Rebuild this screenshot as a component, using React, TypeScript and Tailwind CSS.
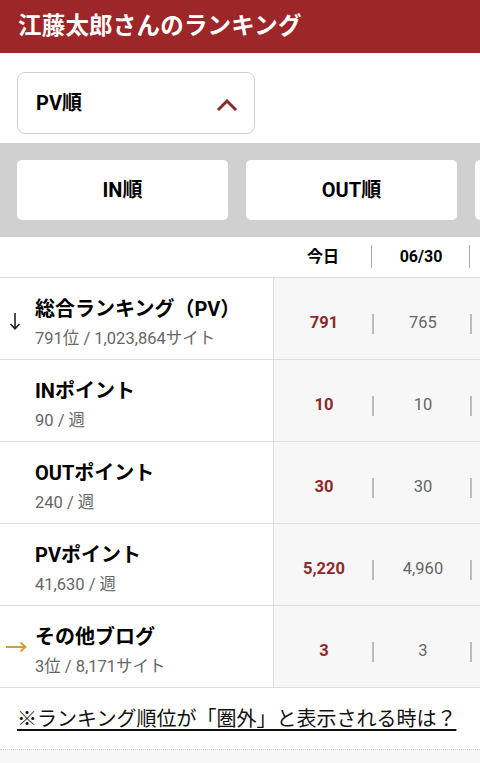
import React from "react";

const font = { fontFamily: "Roboto, 'Noto Sans CJK JP', sans-serif" };

type Row = { arrow?: "down" | "right"; label: string; sub: string; today: string; prev: string };

const rows: Row[] = [
  { arrow: "down", label: "総合ランキング（PV）", sub: "791位 / 1,023,864サイト", today: "791", prev: "765" },
  { label: "INポイント", sub: "90 / 週", today: "10", prev: "10" },
  { label: "OUTポイント", sub: "240 / 週", today: "30", prev: "30" },
  { label: "PVポイント", sub: "41,630 / 週", today: "5,220", prev: "4,960" },
  { arrow: "right", label: "その他ブログ", sub: "3位 / 8,171サイト", today: "3", prev: "3" },
];

export default function App() {
  return (
    <div className="w-[480px] h-[763px] overflow-hidden bg-white text-black" style={font}>
      <div className="h-[53px] bg-[#9c2628] flex items-center pl-[18px]">
        <h1 className="text-white font-bold text-[23.5px] leading-none tracking-[0.2px]">江藤太郎さんのランキング</h1>
      </div>
      <div className="h-[90px] pt-[19px] pl-[17px]">
        <div className="w-[238px] h-[62px] rounded-[8px] border border-[#cfcfcf] flex items-center justify-between pl-[18px] pr-[16px]">
          <span className="font-bold text-[20px]">PV順</span>
          <svg width="22" height="14" viewBox="0 0 22 14" className="mt-[3px]">
            <path d="M2 12 L11 3 L20 12" fill="none" stroke="#8c2a2b" strokeWidth="3" />
          </svg>
        </div>
      </div>
      <div className="h-[94px] bg-[#d0d0d0] flex items-center gap-[18px] pl-[17px] overflow-hidden">
        <div className="shrink-0 w-[211px] h-[60px] bg-white rounded-[5px] flex items-center justify-center font-bold text-[20px]">IN順</div>
        <div className="shrink-0 w-[211px] h-[60px] bg-white rounded-[5px] flex items-center justify-center font-bold text-[20px]">OUT順</div>
        <div className="shrink-0 w-[211px] h-[60px] bg-white rounded-[5px]" />
      </div>
      <div className="h-[41px] flex border-b border-[#dddddd]">
        <div className="w-[274px] shrink-0" />
        {["今日", "06/30"].map((t) => (
          <div key={t} className="w-[98px] shrink-0 flex items-center justify-center relative font-bold text-[16px]">
            {t}
            <span className="absolute right-0 top-[8px] h-[23px] w-px bg-[#aaaaaa]" />
          </div>
        ))}
      </div>
      {rows.map((r) => (
        <div key={r.label} className="h-[82px] flex border-b border-[#dddddd]">
          <div className="w-[274px] shrink-0 relative border-r border-[#dddddd] pl-[35px] pt-[18px]">
            {r.arrow === "down" && (
              <svg width="12" height="18" viewBox="0 0 12 18" className="absolute left-[9px] top-[34px]">
                <path d="M6 1 V16.5 M1.5 12 L6 16.8 L10.5 12" fill="none" stroke="#222" strokeWidth="1.6" />
              </svg>
            )}
            {r.arrow === "right" && (
              <svg width="22" height="12" viewBox="0 0 22 12" className="absolute left-[5px] top-[35px]">
                <path d="M1 6 H20.5 M15.5 1.5 L20.5 6 L15.5 10.5" fill="none" stroke="#d89a2e" strokeWidth="1.8" />
              </svg>
            )}
            <div className="font-bold text-[20px] leading-[26px]">{r.label}</div>
            <div className="text-[16.5px] leading-[22px] text-[#666666] mt-[6px]">{r.sub}</div>
          </div>
          <div className="flex-1 flex bg-[#f7f7f7]">
            <div className="w-[100px] shrink-0 flex items-center justify-center relative font-bold text-[16.5px] text-[#8c2a2b] pt-[9px]">
              {r.today}
              <span className="absolute right-0 top-[36px] h-[20px] w-[2px] bg-[#bbbbbb]" />
            </div>
            <div className="w-[98px] shrink-0 flex items-center justify-center relative text-[16.5px] text-[#666666] pt-[9px]">
              {r.prev}
              <span className="absolute right-0 top-[36px] h-[20px] w-[2px] bg-[#bbbbbb]" />
            </div>
          </div>
        </div>
      ))}
      <div className="h-[61px] pl-[17px] flex items-center">
        <span className="text-[20px] underline underline-offset-[3px] text-[#111111]">※ランキング順位が「圏外」と表示される時は？</span>
      </div>
      <div className="border-t border-dotted border-[#cccccc] bg-[#f6f6f6] h-[30px]" />
    </div>
  );
}
